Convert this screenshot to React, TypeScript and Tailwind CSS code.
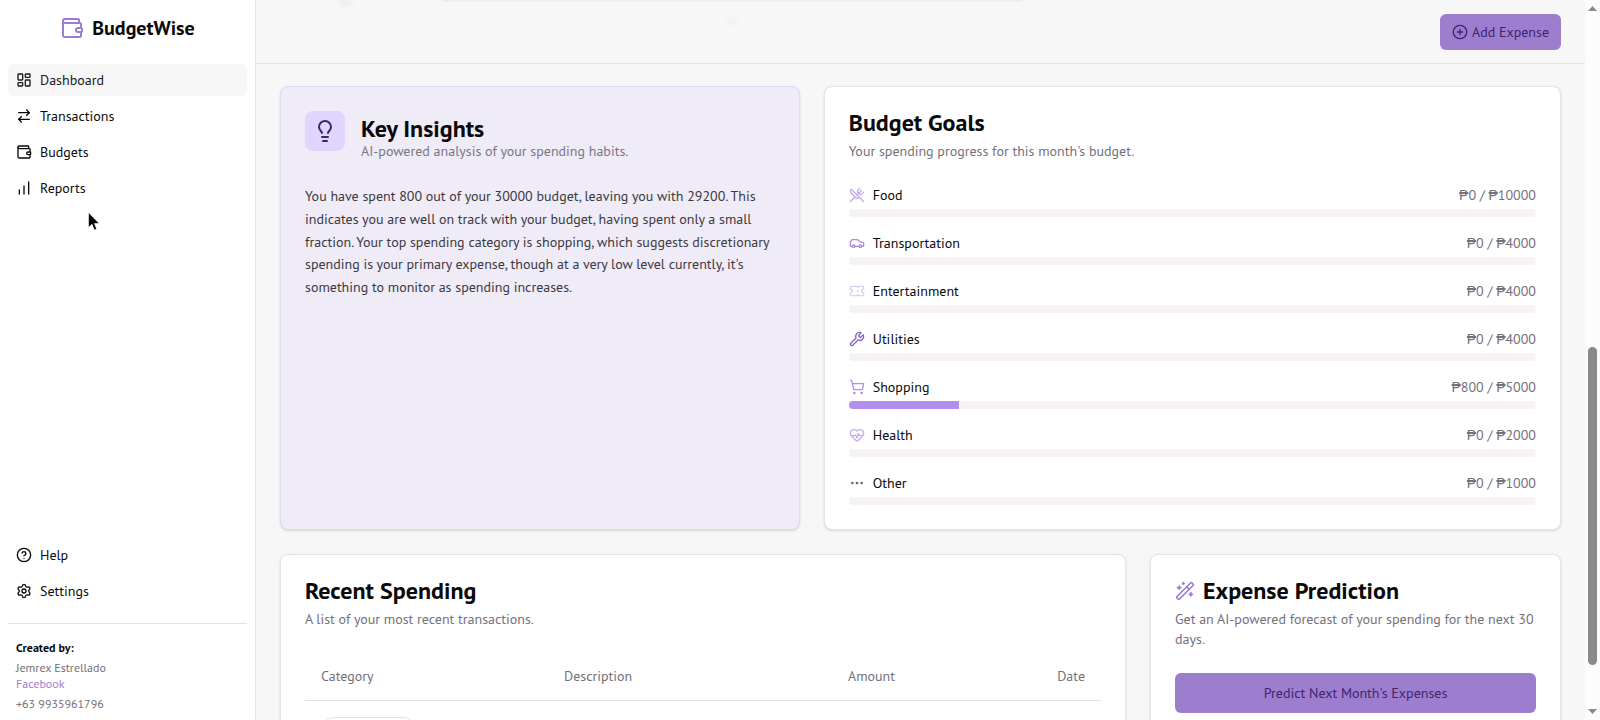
import React from "react";
import {
  ArrowRightLeft,
  Car,
  ChartNoAxesColumnIncreasing,
  CircleHelp,
  CirclePlus,
  Ellipsis,
  HeartPulse,
  LayoutDashboard,
  Lightbulb,
  Settings,
  ShoppingCart,
  Ticket,
  UtensilsCrossed,
  Wallet,
  WandSparkles,
  Wrench,
  type LucideIcon,
} from "lucide-react";

type NavItem = { label: string; icon: LucideIcon; active?: boolean };

const mainNav: NavItem[] = [
  { label: "Dashboard", icon: LayoutDashboard, active: true },
  { label: "Transactions", icon: ArrowRightLeft },
  { label: "Budgets", icon: Wallet },
  { label: "Reports", icon: ChartNoAxesColumnIncreasing },
];

const footerNav: NavItem[] = [
  { label: "Help", icon: CircleHelp },
  { label: "Settings", icon: Settings },
];

type Goal = { name: string; icon: LucideIcon; tint: string; spent: number; limit: number };

const goals: Goal[] = [
  { name: "Food", icon: UtensilsCrossed, tint: "text-[#c1aae8]", spent: 0, limit: 10000 },
  { name: "Transportation", icon: Car, tint: "text-[#a98bd8]", spent: 0, limit: 4000 },
  { name: "Entertainment", icon: Ticket, tint: "text-[#ddd0f2]", spent: 0, limit: 4000 },
  { name: "Utilities", icon: Wrench, tint: "text-[#8763c0]", spent: 0, limit: 4000 },
  { name: "Shopping", icon: ShoppingCart, tint: "text-[#b48eec]", spent: 800, limit: 5000 },
  { name: "Health", icon: HeartPulse, tint: "text-[#c4aeea]", spent: 0, limit: 2000 },
  { name: "Other", icon: Ellipsis, tint: "text-[#6b6673]", spent: 0, limit: 1000 },
];

function NavList({ items }: { items: NavItem[] }) {
  return (
    <ul className="flex flex-col gap-1">
      {items.map(({ label, icon: Icon, active }) => (
        <li key={label}>
          <a
            href="#"
            className={
              active
                ? "flex h-8 items-center gap-2 rounded-md bg-[#f6f6f6] px-2 text-sm text-[#18181b]"
                : "flex h-8 items-center gap-2 rounded-md px-2 text-sm text-[#0a0a0b]"
            }
          >
            <Icon className="size-4" />
            {label}
          </a>
        </li>
      ))}
    </ul>
  );
}

function Sidebar() {
  return (
    <aside className="flex w-64 shrink-0 flex-col border-r border-[#e4e4e6] bg-white">
      <div className="flex h-14 items-center justify-center gap-2">
        <Wallet className="size-6 text-[#9d7dcd]" />
        <span className="text-xl font-bold">BudgetWise</span>
      </div>
      <nav className="flex flex-1 flex-col justify-between p-2">
        <NavList items={mainNav} />
        <NavList items={footerNav} />
      </nav>
      <div className="px-2 pb-2 pt-2">
        <div className="border-t border-[#e2e2e5] px-2 pt-4 text-xs leading-4 text-[#73717b]">
          <p className="mb-1 font-bold text-[#0a0a0b]">Created by:</p>
          <p>Jemrex Estrellado</p>
          <a href="#" className="block text-[#9d7dcd]">
            Facebook
          </a>
          <p className="mt-1">+63 9935961796</p>
        </div>
      </div>
    </aside>
  );
}

function Card({ className, children }: { className: string; children: React.ReactNode }) {
  return <section className={`rounded-lg border p-6 shadow-sm ${className}`}>{children}</section>;
}

function Peso({ amount }: { amount: number }) {
  return (
    <>
      <span className="font-['Liberation_Sans',sans-serif]">₱</span>
      {amount}
    </>
  );
}

function KeyInsights() {
  return (
    <Card className="col-span-5 border-[#e0dbf5] bg-[#efebf7]">
      <div className="flex gap-4">
        <div className="flex size-10 items-center justify-center rounded-lg bg-[#ded6fd] text-[#40246f]">
          <Lightbulb className="size-6" />
        </div>
        <div className="pt-1.5">
          <h2 className="text-2xl leading-none font-bold">Key Insights</h2>
          <p className="text-sm text-[#7a7684]">AI-powered analysis of your spending habits.</p>
        </div>
      </div>
      <p className="mt-6 text-sm leading-relaxed text-[#3b3942]">
        You have spent 800 out of your 30000 budget, leaving you with 29200. This indicates you are
        well on track with your budget, having spent only a small fraction. Your top spending
        category is shopping, which suggests discretionary spending is your primary expense, though
        at a very low level currently, it's something to monitor as spending increases.
      </p>
    </Card>
  );
}

function BudgetGoals() {
  return (
    <Card className="col-span-7 border-[#e4e4e6] bg-white">
      <h2 className="text-2xl leading-none font-bold">Budget Goals</h2>
      <p className="mt-1.5 text-sm text-[#73717b]">Your spending progress for this month's budget.</p>
      <ul className="mt-6 flex flex-col gap-4">
        {goals.map(({ name, icon: Icon, tint, spent, limit }) => (
          <li key={name} className="flex flex-col gap-1">
            <div className="flex h-5 items-center justify-between text-sm">
              <span className="flex items-center gap-2">
                <Icon className={`size-4 ${tint}`} />
                {name}
              </span>
              <span className="text-[#73717b]">
                <Peso amount={spent} /> / <Peso amount={limit} />
              </span>
            </div>
            <div className="h-2 overflow-hidden rounded-full bg-[#f7f2f6]">
              <div className="h-full bg-[#b48eec]" style={{ width: `${(spent / limit) * 100}%` }} />
            </div>
          </li>
        ))}
      </ul>
    </Card>
  );
}

function RecentSpending() {
  return (
    <Card className="col-span-2 border-[#e4e4e6] bg-white">
      <h2 className="text-2xl leading-none font-bold">Recent Spending</h2>
      <p className="mt-1.5 text-sm text-[#73717b]">A list of your most recent transactions.</p>
      <table className="mt-6 w-full table-fixed text-sm">
        <thead>
          <tr className="h-[47px] border-b border-[#e2e2e5] text-[#73717b]">
            <th className="w-[243px] px-4 text-left font-normal">Category</th>
            <th className="px-4 text-left font-normal">Description</th>
            <th className="w-[18%] px-4 text-right font-normal">Amount</th>
            <th className="w-[190px] px-4 text-right font-normal">Date</th>
          </tr>
        </thead>
        <tbody>
          <tr>
            <td className="p-4">
              <span className="flex w-fit items-center gap-1 rounded-full border border-[#e2e2e5] px-3 py-1 text-xs font-bold">
                <ShoppingCart className="size-4" />
                Shopping
              </span>
            </td>
            <td />
            <td />
            <td />
          </tr>
        </tbody>
      </table>
    </Card>
  );
}

function ExpensePrediction() {
  return (
    <Card className="border-[#e4e4e6] bg-white">
      <h2 className="flex items-center gap-2 text-2xl leading-none font-bold">
        <WandSparkles className="size-5 text-[#9d7dcd]" />
        Expense Prediction
      </h2>
      <p className="mt-1.5 text-sm text-[#73717b]">
        Get an AI-powered forecast of your spending for the next 30 days.
      </p>
      <button type="button" className="mt-6 h-10 w-full rounded-md bg-[#9d7dcd] text-sm text-[#40246f]">
        Predict Next Month's Expenses
      </button>
    </Card>
  );
}

function ScrollTrack() {
  return (
    <div className="flex w-[15px] shrink-0 flex-col items-center justify-between bg-[#fdfbfe] py-1" aria-hidden="true">
      <svg viewBox="0 0 9 9" className="size-[9px] fill-[#8b898c]">
        <path d="M4.500 2L9 7H0Z" />
      </svg>
      <div className="flex w-full flex-1 flex-col items-center">
        <div className="flex-[334]" />
        <div className="w-[9px] flex-[318] rounded-full bg-[#8b898c]" />
        <div className="flex-[42]" />
      </div>
      <svg viewBox="0 0 9 9" className="size-[9px] fill-[#8b898c]">
        <path d="M4.500 7L0 2H9Z" />
      </svg>
    </div>
  );
}

export default function App() {
  return (
    <div className="relative flex h-screen overflow-hidden bg-[#f7f7f7] font-['PT_Sans','Lato','Noto_Sans',sans-serif] text-[#0a0a0b]">
      <Sidebar />
      <main className="min-w-0 flex-1">
        <header className="relative flex h-16 items-center justify-end border-b border-[#e6e2e8] px-6">
          <div aria-hidden="true">
            <div className="absolute left-[186px] top-0 h-0.5 w-[581px] rounded-b-sm bg-[#efebf7]" />
            <div className="absolute left-[84px] top-0 h-1.5 w-3 bg-[#ececee] blur-[2px]" />
            <div className="absolute left-[470px] top-5 h-1 w-3 rounded-full bg-[#ebf1ed] blur-[2px]" />
          </div>
          <button
            type="button"
            className="flex h-9 items-center gap-1 rounded-md bg-[#9d7dcd] px-3 text-sm text-[#40246f]"
          >
            <CirclePlus className="size-4" />
            Add Expense
          </button>
        </header>
        <div className="flex flex-col gap-6 px-6 pt-[22px]">
          <div className="grid grid-cols-12 gap-6">
            <KeyInsights />
            <BudgetGoals />
          </div>
          <div className="grid grid-cols-3 gap-6">
            <RecentSpending />
            <ExpensePrediction />
          </div>
        </div>
      </main>
      <ScrollTrack />
      <svg
        viewBox="0 0 12 19"
        className="absolute left-[88px] top-[212px] h-[19px] w-3"
        aria-hidden="true"
      >
        <path d="M0.500 0.500V15.500L4 12.300L6.300 18L8.700 17L6.400 11.500H11.200Z" fill="#000" stroke="#fff" strokeWidth="0.600" />
      </svg>
    </div>
  );
}
